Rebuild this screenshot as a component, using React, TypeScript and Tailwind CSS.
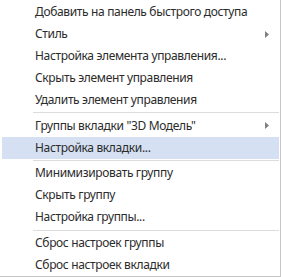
import React from "react";

type Item = { label?: string; sep?: boolean; arrow?: boolean; active?: boolean };

const items: Item[] = [
  { label: "Добавить на панель быстрого доступа" },
  { label: "Стиль", arrow: true },
  { label: "Настройка элемента управления..." },
  { label: "Скрыть элемент управления" },
  { label: "Удалить элемент управления" },
  { sep: true },
  { label: 'Группы вкладки "3D Модель"', arrow: true },
  { label: "Настройка вкладки...", active: true },
  { sep: true },
  { label: "Минимизировать группу" },
  { label: "Скрыть группу" },
  { label: "Настройка группы..." },
  { sep: true },
  { label: "Сброс настроек группы" },
  { label: "Сброс настроек вкладки" },
];

export default function App() {
  return (
    <div
      className="w-[281px] h-[277px] bg-white border-r border-b border-[#c6c6c6] pl-[2px] pr-[1px] pt-[1px] flex flex-col text-[#2b2b2b] text-[12px]"
      style={{ fontFamily: '"Noto Sans", "Open Sans", sans-serif' }}
    >
      {items.map((it, i) =>
        it.sep ? (
          <div key={i} className="h-[4px] flex items-center pl-[31px]">
            <div className="h-px w-full bg-[#dcdcdc]" />
          </div>
        ) : (
          <div
            key={i}
            className={`h-[22px] shrink-0 flex items-center justify-between pl-[33px] pr-[10px] ${
              it.active ? "bg-[#d5e1f2]" : ""
            }`}
          >
            <span className="leading-none tracking-[-0.35px] whitespace-nowrap">{it.label}</span>
            {it.arrow && (
              <svg width="4" height="7" viewBox="0 0 4 7">
                <path d="M0 0 L4 3.5 L0 7 Z" fill="#808080" />
              </svg>
            )}
          </div>
        )
      )}
    </div>
  );
}
